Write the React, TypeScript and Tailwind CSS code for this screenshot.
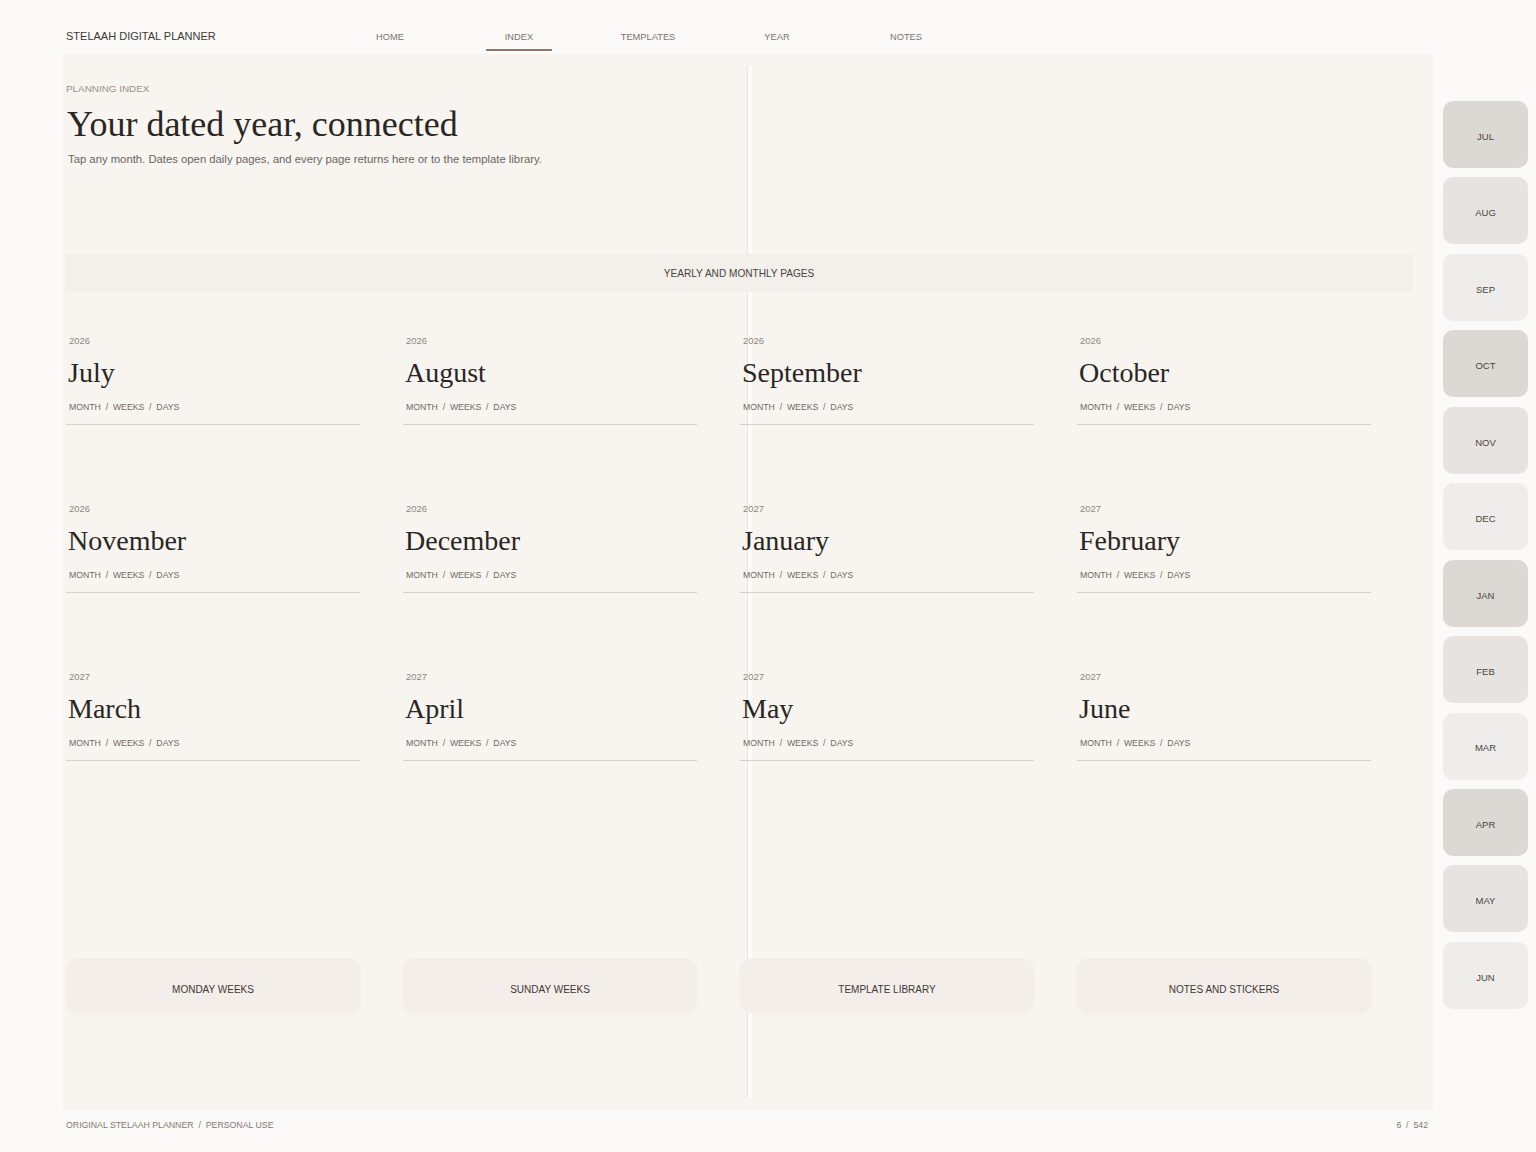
import React from "react";

const months = [
  ["2026", "July"], ["2026", "August"], ["2026", "September"], ["2026", "October"],
  ["2026", "November"], ["2026", "December"], ["2027", "January"], ["2027", "February"],
  ["2027", "March"], ["2027", "April"], ["2027", "May"], ["2027", "June"],
];

const tabs = ["JUL", "AUG", "SEP", "OCT", "NOV", "DEC", "JAN", "FEB", "MAR", "APR", "MAY", "JUN"];
const tabBg = ["bg-[#dcd8d3]", "bg-[#e6e3e0]", "bg-[#eeedeb]"];

const nav = ["HOME", "INDEX", "TEMPLATES", "YEAR", "NOTES"];

const sans = "font-['Liberation_Sans',Arial,sans-serif]";
const serif = "font-['Liberation_Serif','Times_New_Roman',serif]";

export default function App() {
  return (
    <div className={`min-h-[1152px] w-[1536px] bg-[#fbfaf8] ${sans} flex flex-col`}>
      {/* header */}
      <div className="h-[54px] flex items-start">
        <div className="ml-[66px] mt-[30px] text-[11px] leading-[13px] text-[#3d3834] w-[291px]">
          STELAAH DIGITAL PLANNER
        </div>
        <div className="flex gap-[63px]">
          {nav.map((n) => (
            <div key={n} className="w-[66px] h-[53px] flex flex-col items-center">
              <div className="mt-[32px] text-[9.3px] leading-[11px] text-[#7a736d]">{n}</div>
              {n === "INDEX" && <div className="mt-[6px] h-[2px] w-[66px] bg-[#8c776d]" />}
            </div>
          ))}
        </div>
      </div>

      {/* main */}
      <div className="flex">
        <div className="relative ml-[63px] w-[1370px] h-[1056px] bg-[#f8f5f0]">
          {/* spine */}
          <div className="absolute left-[684px] top-[12px] h-[1032px] w-[5px] flex">
            <div className="w-[1px] bg-[#e9e4dd]" />
            <div className="w-[4px] bg-[#fefdfc]" />
          </div>

          <div className="relative flex flex-col">
            <div className="ml-[3px] mt-[29px] text-[9.9px] leading-[12px] text-[#9b9088]">PLANNING INDEX</div>
            <h1 className={`ml-[4px] mt-[9px] ${serif} text-[36px] leading-[40px] text-[#2a2624]`}>
              Your dated year, connected
            </h1>
            <p className="ml-[5px] mt-[8px] text-[11.3px] leading-[14px] text-[#6b645e]">
              Tap any month. Dates open daily pages, and every page returns here or to the template library.
            </p>

            <div className="ml-[2px] mt-[88px] w-[1348px] h-[38px] pt-[2px] bg-[#f3efea] flex items-center justify-center text-[10.1px] text-[#4a443f]">
              YEARLY AND MONTHLY PAGES
            </div>

            <div className="ml-[3px] mt-[43px] grid grid-cols-[294px_294px_294px_294px] gap-x-[43px] gap-y-[78px]">
              {months.map(([y, m]) => (
                <div key={m} className="h-[90px] border-b border-[#d6d1cb] flex flex-col">
                  <div className="ml-[3px] text-[9.4px] leading-[11px] text-[#8d857e]">{y}</div>
                  <div className={`ml-[2px] mt-[11px] ${serif} text-[28px] leading-[32px] text-[#2a2624]`}>{m}</div>
                  <div className="ml-[3px] mt-[13px] text-[8.7px] leading-[10px] text-[#6f6862]">
                    MONTH&nbsp; /&nbsp; WEEKS&nbsp; /&nbsp; DAYS
                  </div>
                </div>
              ))}
            </div>

            <div className="ml-[3px] mt-[197px] grid grid-cols-[294px_294px_294px_294px] gap-x-[43px]">
              {["MONDAY WEEKS", "SUNDAY WEEKS", "TEMPLATE LIBRARY", "NOTES AND STICKERS"].map((b) => (
                <div
                  key={b}
                  className="h-[55px] pt-[7px] rounded-[12px] bg-[#f3eee9] shadow-[0_2px_4px_rgba(120,100,80,0.03)] flex items-center justify-center text-[10px] text-[#3d3833]"
                >
                  {b}
                </div>
              ))}
            </div>
          </div>
        </div>

        {/* tabs */}
        <div className="ml-[10px] mt-[47px] flex flex-col gap-[9.45px]">
          {tabs.map((t, i) => (
            <div
              key={t}
              className={`w-[85px] h-[67px] pt-[5px] rounded-[10px] ${tabBg[i % 3]} flex items-center justify-center text-[9.5px] text-[#4a4541]`}
            >
              {t}
            </div>
          ))}
        </div>
      </div>

      {/* footer */}
      <div className="flex justify-between w-[1362px] ml-[66px] mt-[10px] text-[8.75px] leading-[10px] text-[#817971]">
        <div>ORIGINAL STELAAH PLANNER&nbsp; /&nbsp; PERSONAL USE</div>
        <div>6&nbsp; /&nbsp; 542</div>
      </div>
    </div>
  );
}
